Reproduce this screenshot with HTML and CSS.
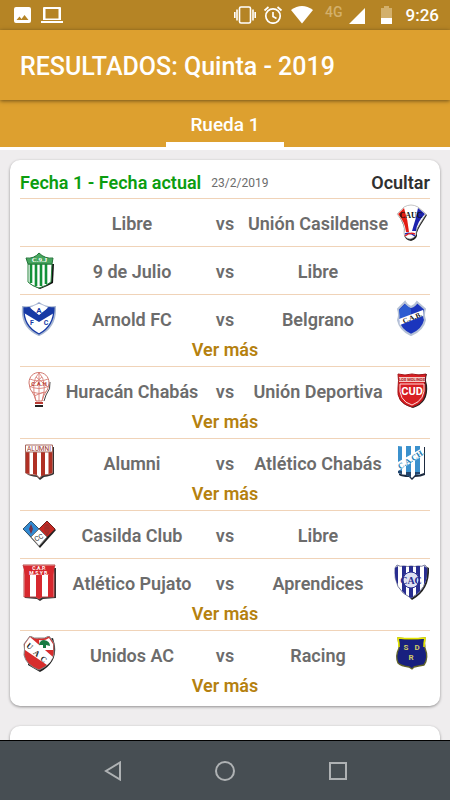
FILE: index.html
```
<!DOCTYPE html>
<html lang="es">
<head>
	<title>Resultados</title>
	<meta charset="utf-8" />
	<meta name="viewport" content="width=device-width, initial-scale=1.0" />
	<link rel="stylesheet" href="styles.css">
</head>
<body>
<div class="statusbar">
	<svg class="icon" width="17" height="17" viewBox="0 0 17 17"><path fill="#fff" fill-rule="evenodd" d="M2 0h13q2 0 2 2v12q0 2-2 2H2q-2 0-2-2V2q0-2 2-2zM2.500 13h12l-4-5-3 4-2-2.500z"/></svg>
	<svg class="icon" width="22" height="17" viewBox="0 0 22 17"><path fill="#fff" fill-rule="evenodd" d="M2 1q0-1 1-1h16q1 0 1 1v12H2zM4.500 2v9.500h13V2zM0 14h22v2H0z"/></svg>
	<div class="status-right">
		<svg width="23" height="18" viewBox="0 0 23 18"><g fill="none" stroke="#fff" stroke-width="1.600"><rect x="5.500" y="1" width="11" height="16" rx="1.500"/><path d="M3 3.500v11M19 3.500v11M.8 6v6M21.200 6v6"/></g></svg>
		<svg width="20" height="18" viewBox="0 0 20 18"><g fill="none" stroke="#fff" stroke-width="1.700"><circle cx="10" cy="10" r="7.200"/><path d="M10 6v4.500l3.500 2M1.500 4.500l4-3.500M18.500 4.500l-4-3.500"/></g></svg>
		<svg width="24" height="18" viewBox="0 0 24 18"><path fill="#fff" d="M2 4Q13 -4 24 4L13 17.500z"/></svg>
		<span class="network">4G</span>
		<svg width="21" height="18" viewBox="0 0 21 18"><path fill="#fff" d="M16 2v16H0z"/></svg>
		<svg width="24" height="18" viewBox="0 0 24 18"><path fill="#d3b06b" d="M8 0h5v2h3v10H5V2h3z"/><path fill="#fff" d="M5 12h11v6H5z"/></svg>
		<span class="clock">9:26</span>
	</div>
</div>

<header class="toolbar">
	<h1>RESULTADOS: Quinta - 2019</h1>
</header>
<nav class="tabs">
	<button type="button" class="tab selected">Rueda 1</button>
</nav>

<main class="content">
	<section class="card">
		<div class="card-head">
			<h2>Fecha 1 - Fecha actual</h2>
			<span class="date">23/2/2019</span>
			<button type="button" class="toggle">Ocultar</button>
		</div>
		<ul class="matches">
			<li>
				<div class="match">
					<span></span>
					<span class="team">Libre</span>
					<span class="vs">vs</span>
					<span class="team">Unión Casildense</span>
					<svg class="crest" viewBox="0 0 38 38">
						<path fill="#222" d="M6 11l7-7Q20 0 27 4l8 7-5 8q-4 6-5 10 1 6-6 8-6-1-7-6 2-9-6-20z"/>
						<path fill="#fff" stroke="#aaa" stroke-width=".7" d="M5 10l7-7q7-4 14 0l8 7-5 8q-4 6-5 10 1 5-6 7-6-1-6-6 2-9-7-19z"/>
						<path fill="#e31b12" d="M6 10l6-6q4 12 5 24h-3Q13 18 6 10z"/>
						<path fill="#1c22ad" d="M26 4l7 6q-8 8-9 17h-4q4-12 6-23z"/>
						<path fill="none" stroke="#1c22ad" stroke-width="1.500" d="M13 30q5-2 10 2"/>
						<path fill="none" stroke="#d22" stroke-width="1.500" d="M13 32q5-4 10-2"/>
						<text class="serif" x="19" y="14" font-size="8" fill="#111">CAUC</text>
					</svg>
				</div>
			</li>
			<li>
				<div class="match">
					<svg class="crest" viewBox="0 0 38 38">
						<path fill="#111" d="M9 12h25l-1 19q-5 3-13 6-8-3-11-6z"/>
						<path fill="#fff" stroke="#27843d" d="M8 12h24l-1 18q-5 4-12 6-7-2-11-6z"/>
						<path stroke="#139139" stroke-width="2.600" d="M11 12v19M16 12v22M21 12v22M26 12v20"/>
						<path fill="#46a65e" stroke="#24743a" d="M6 6q8 1 13-5 6 6 14 5l-1 6H8z"/>
						<text class="serif" x="19.500" y="10" font-size="7" fill="#fff">C.9.J</text>
					</svg>
					<span class="team">9 de Julio</span>
					<span class="vs">vs</span>
					<span class="team">Libre</span>
				</div>
			</li>
			<li>
				<div class="match">
					<svg class="crest" viewBox="0 0 38 38">
						<path fill="#fff" stroke="#a9b8d2" stroke-width="2" d="M19 3q6 5 16 4 1 20-16 28Q1 27 3 7q10 1 16-4z"/>
						<path fill="none" stroke="#173aa5" stroke-width="1.300" d="M19 4q6 5 15 4 0 18-15 26Q3 26 4 8q9 1 15-4z"/>
						<path fill="#173aa5" d="M4 8l5-1 10 8 10-8 5 1v5l-15 9-15-9z"/>
						<path fill="#fff" d="M10 7.500l9-4 9 4-9 7z"/>
						<text x="19" y="13" font-size="8" fill="#173aa5">A</text>
						<text x="12" y="25" font-size="7" fill="#173aa5">F</text>
						<text x="26" y="25" font-size="7" fill="#173aa5">C</text>
					</svg>
					<span class="team">Arnold FC</span>
					<span class="vs">vs</span>
					<span class="team">Belgrano</span>
					<svg class="crest" viewBox="0 0 38 38">
						<path fill="#1b35bd" stroke="#b5c1d6" stroke-width="2" d="M13 2q2 4 6 5 4-1 6-5l8 7q-2 6 0 11-2 10-14 15Q8 30 6 20q2-5 0-11z"/>
						<path fill="#2c5bd0" d="M13 4l6 5v6L8 20l-1-10z"/>
						<path fill="#fff" d="M7 19l24-9v6L8 25z"/>
						<text class="serif" x="20" y="20" font-size="7" fill="#111" transform="rotate(-21 20 17)">C.A.B.</text>
					</svg>
				</div>
				<button type="button" class="more">Ver más</button>
			</li>
			<li>
				<div class="match">
					<svg class="crest" viewBox="0 0 38 38">
						<path fill="none" stroke="#444" d="M30 10q1 7-4 13l-2 6"/>
						<path fill="#fff" stroke="#d0776e" d="M9 11C9-3 29-3 29 11q0 6-5 12l-2 6h-6l-2-6Q9 17 9 11z"/>
						<path fill="none" stroke="#d98078" stroke-width=".9" d="M19 1v28M19 1q-9 8-3 28M19 1q9 8 3 28M10 7q9 4 18 0M9 14q10 5 20 0M12 20q7 3 14 0M14 24l10-4M10 15l12-10M28 15L16 5"/>
						<text x="19" y="14" font-size="6" fill="#b83c34">C.A.H</text>
						<path fill="#b93b33" d="M15 30h8v2h-8z"/><path fill="#222" d="M15 33h8v2h-8z"/>
					</svg>
					<span class="team">Huracán Chabás</span>
					<span class="vs">vs</span>
					<span class="team">Unión Deportiva</span>
					<svg class="crest" viewBox="0 0 38 38">
						<path fill="#222" d="M8 4l27-2q-2 6 0 11 2 18-14 23Q10 33 7 26z"/>
						<path fill="#d81e22" stroke="#a3171a" d="M6 2q7 2 14 0 7 2 14 0-2 5-1 12 2 17-13 21Q4 31 6 16q1-8 0-14z"/>
						<path fill="none" stroke="#ffd9d5" d="M8 12h24q2 16-12 21Q6 29 8 12z"/>
						<path fill="#f7cbc5" d="M7 5h26v5H7z"/>
						<text x="20" y="9" font-size="4" fill="#a31518">LOS MOLINOS</text>
						<text x="20" y="23" font-size="11" fill="#fff">CUD</text>
					</svg>
				</div>
				<button type="button" class="more">Ver más</button>
			</li>
			<li>
				<div class="match">
					<svg class="crest" viewBox="0 0 38 38">
						<path fill="#333" d="M7 3h27v27q-3 2-10 3l-4 3-3-3q-8-1-10-3z"/>
						<path fill="#fff" stroke="#a6665d" d="M5.500 1h27v28q-4 2-10 2l-3 3-3-3q-7 0-11-2z"/>
						<path fill="#b03024" d="M6 8h3.500v22L6 29zM13 8h4v23l-4-1zM21 8h4v23l-4 1zM28.500 8H32v21l-3.500 1z"/>
						<text class="thin" x="19" y="7" font-size="6.500" fill="#993128">ALUMNI</text>
						<path stroke="#a6665d" d="M5 8h27"/>
					</svg>
					<span class="team">Alumni</span>
					<span class="vs">vs</span>
					<span class="team">Atlético Chabás</span>
					<svg class="crest" viewBox="0 0 38 38">
						<path fill="#1d2b40" d="M7 3h26v28q-4 2-10 2l-3 3-3-3q-7 0-10-2z"/>
						<path fill="#fff" d="M6 1q6 2 13 1 7 1 13-1v28q-4 2-9 2l-3 3-4-3q-6 0-10-2z"/>
						<path fill="#3b91cd" d="M6 2l4 .5V30l-4-1zM14 2h5v31l-5-2zM23 2h5v28l-5 1z"/>
						<path fill="#23466e" d="M6 26l4 1v3l-4-1zM14 28h5v5l-5-2zM23 28h5v2l-5 1z"/>
						<path fill="#fff" d="M6 18L32 3v8L6 27z"/>
						<text class="serif" x="19" y="18" font-size="8" fill="#2380b7" transform="rotate(-32 19 15)">C.A.CH.</text>
					</svg>
				</div>
				<button type="button" class="more">Ver más</button>
			</li>
			<li>
				<div class="match">
					<svg class="crest" viewBox="0 0 38 38">
						<path fill="#222" d="M12 6l8 8 8-8 8 8-16 18L4 14z"/>
						<path fill="#328ad1" stroke="#36546e" d="M11 5l8 8-8 8-8-8z"/>
						<path fill="#c62924" stroke="#6e211e" d="M27 5l8 8-8 8-8-8z"/>
						<path fill="#fff" stroke="#777" d="M19 13l8 8-8 9-8-9z"/>
						<path fill="#753246" d="M11 8l2 5-2 5-2-5z"/>
						<path fill="none" stroke="#94302d" d="M25 9h4v6l-2 4-2-4zM25 12h4M27 8v10"/>
						<text class="thin" x="19" y="24" font-size="7" fill="#333" transform="rotate(-25 19 22)">CC</text>
					</svg>
					<span class="team">Casilda Club</span>
					<span class="vs">vs</span>
					<span class="team">Libre</span>
				</div>
			</li>
			<li>
				<div class="match">
					<svg class="crest" viewBox="0 0 38 38">
						<path fill="#333" d="M5 4h31v30l-13 1-3 2-3-2-12-1z"/>
						<path fill="#fff" stroke="#b64b49" d="M3 1h32q-2 4-1 9v23H22l-3 2-3-2H4V10q1-5-1-9z"/>
						<path fill="#d7282e" d="M3.500 1.500h31L33.500 11h-29zM4.500 11H10v22H4.500zM16 11h6v22l-3 2-3-2zM28 11h5.500v22H28z"/>
						<text x="19" y="6" font-size="5" fill="#fff">C.A.P.</text>
						<text x="19" y="10.500" font-size="5" fill="#fff">M.S.Y B.</text>
					</svg>
					<span class="team">Atlético Pujato</span>
					<span class="vs">vs</span>
					<span class="team">Aprendices</span>
					<svg class="crest" viewBox="0 0 38 38">
						<path fill="#222" d="M33 2l4 2q1 22-17 32l-2-2Q35 22 33 2z"/>
						<path fill="#fff" stroke="#777b9d" d="M5 1q3 2 7 1 4 1 7 0 4 1 7 0 4 1 7-1l2 3q1 22-16 30Q1 26 3 4z"/>
						<path fill="#292e90" d="M3 4l3-2v19Q2 14 3 4zM10 2h4v29l-4-4zM17 2h4v31l-2 1-2-1zM24 2h4v25l-4 4zM32 2l3 2q1 9-3 17z"/>
						<circle cx="19" cy="16" r="8" fill="#dfe1f2" stroke="#292e90"/>
						<text class="serif" x="19" y="20" font-size="10" fill="#292e90">CAC</text>
					</svg>
				</div>
				<button type="button" class="more">Ver más</button>
			</li>
			<li>
				<div class="match">
					<svg class="crest" viewBox="0 0 38 38">
						<path fill="#222" d="M12 2q5 3 10 2 6 0 11-2l2 8q2 17-15 26L8 29z"/>
						<path fill="#d72d2d" stroke="#888" d="M10 0q4 3 9 2 6 1 10-2l5 7q0 6 0 11-3 11-15 16Q6 29 4 19q1-6 0-11z"/>
						<path fill="#fff" d="M5 8l5-7 23 20q-2 5-6 8L5 14z"/>
						<path fill="#fff" d="M19 4q6 1 10-2l4 6v6H20z"/>
						<path fill="#177b43" d="M19 9q1-5 5-5 6 1 6 6l-4-1v3h-3V9z"/>
						<g class="serif" font-size="8" fill="#222">
							<text x="10" y="13" transform="rotate(40 10 10)">U</text>
							<text x="17" y="20" transform="rotate(40 17 17)">A</text>
							<text x="24" y="26" transform="rotate(40 24 23)">C</text>
						</g>
					</svg>
					<span class="team">Unidos AC</span>
					<span class="vs">vs</span>
					<span class="team">Racing</span>
					<svg class="crest" viewBox="0 0 38 38">
						<path fill="#18207f" stroke="#62642a" stroke-width="1.300" d="M6 2q13 2 27 0-1 5 0 10 4 10-1 17-6 1-10 2l-2 2-3-2Q9 30 6 27q-3-7 1-15 0-5-1-10z"/>
						<path fill="none" stroke="#e6e600" stroke-width="1.600" d="M7 11q0-4-1-9 13 1 27 0-1 5-1 9"/>
						<text x="14" y="14" font-size="8" fill="#d0cb65">S</text>
						<text x="25" y="14" font-size="8" fill="#d0cb65">D</text>
						<text x="19" y="24" font-size="8" fill="#d0cb65">R</text>
					</svg>
				</div>
				<button type="button" class="more">Ver más</button>
			</li>
		</ul>
	</section>
	<section class="card next"></section>
</main>

<footer class="navbar">
	<button type="button" aria-label="Atrás"><svg width="20" height="20" viewBox="0 0 20 20"><path d="M17 1.500v17L3 10z"/></svg></button>
	<button type="button" aria-label="Inicio"><svg width="20" height="20" viewBox="0 0 20 20"><circle cx="10" cy="10" r="9"/></svg></button>
	<button type="button" aria-label="Recientes"><svg width="20" height="20" viewBox="0 0 20 20"><path d="M2 2h16v16H2z"/></svg></button>
</footer>
</body>
</html>
```
FILE: styles.css
```
* {
	box-sizing: border-box;
}
body {
	margin: 0;
	height: 100vh;
	display: flex;
	flex-direction: column;
	overflow: hidden;
	background-color: #efedee;
	font-family: Roboto, sans-serif;
	color: #6c6c6c;
}
h1, h2, ul {
	margin: 0;
	padding: 0;
}
button {
	border: 0;
	padding: 0;
	background: none;
	font-family: inherit;
	cursor: pointer;
}
svg {
	display: block;
	flex: none;
}

/* system status bar */
.statusbar {
	flex: none;
	height: 30px;
	padding: 0 11px 0 14px;
	display: flex;
	align-items: center;
	gap: 10px;
	background-color: #b58425;
	color: #fff;
}
.status-right {
	margin-left: auto;
	display: flex;
	align-items: center;
	gap: 6px;
}
.network {
	width: 24px;
	height: 20px;
	text-align: right;
	font: 500 14px/14px Roboto, sans-serif;
	color: #d3b06b;
}
.clock {
	font: 500 17px/20px Roboto, sans-serif;
}

.toolbar {
	flex: none;
	height: 70px;
	padding: 2px 20px 0;
	display: flex;
	align-items: center;
	background-color: #dda02f;
	box-shadow: 0 1px 4px rgba(0,0,0,0.5);
	z-index: 2;
}
.toolbar h1 {
	font-size: 25px;
	font-weight: 500;
	color: #fff;
}
.tabs {
	flex: none;
	height: 50px;
	display: flex;
	justify-content: center;
	background-color: #dda02f;
	border-bottom: 3px solid #fff;
}
.tab {
	width: 118px;
	font-size: 19px;
	font-weight: 500;
	color: #fff;
}
.tab.selected {
	padding-top: 6px;
	border-bottom: 5px solid #fff;
}

.content {
	flex: 1;
	min-height: 0;
	overflow: hidden;
	padding: 10px;
}
.card {
	padding: 0 10px 4px;
	background-color: #fff;
	border-radius: 10px;
	box-shadow: 0 1px 3px rgba(0,0,0,0.4);
}
.card.next {
	margin-top: 20px;
	height: 100px;
}
.card-head {
	height: 38px;
	padding-top: 7px;
	display: flex;
	align-items: center;
	gap: 10px;
}
.card-head h2 {
	font-size: 18px;
	font-weight: 600;
	color: #0c9d10;
}
.date {
	font-size: 12px;
}
.toggle {
	margin-left: auto;
	font-size: 18px;
	font-weight: 600;
	color: #303030;
}

.matches {
	list-style: none;
}
.matches li {
	padding: 5px 0 4px;
	border-top: 1px solid #f0d3b8;
}
.match {
	display: grid;
	grid-template-columns: 38px 1fr 38px 1fr 38px;
	align-items: center;
	height: 38px;
	text-align: center;
	font-size: 18px;
	font-weight: 600;
}
.team {
	white-space: nowrap;
}
.more {
	display: block;
	margin: 0 auto;
	font-size: 18px;
	line-height: 24px;
	font-weight: 600;
	color: #b5810f;
}
.crest {
	width: 38px;
	height: 38px;
}
.crest text {
	font-family: Roboto, sans-serif;
	font-weight: bold;
	text-anchor: middle;
}
.crest text.serif, .crest .serif text {
	font-family: "Liberation Serif", serif;
}
.crest text.thin {
	font-weight: normal;
}

.navbar {
	flex: none;
	height: 60px;
	padding: 0 12.5%;
	display: flex;
	background-color: #474e53;
	border-top: 1px solid #000;
}
.navbar button {
	flex: 1;
	display: flex;
	align-items: center;
	justify-content: center;
}
.navbar svg {
	fill: none;
	stroke: #afb2b4;
	stroke-width: 2;
}
```
